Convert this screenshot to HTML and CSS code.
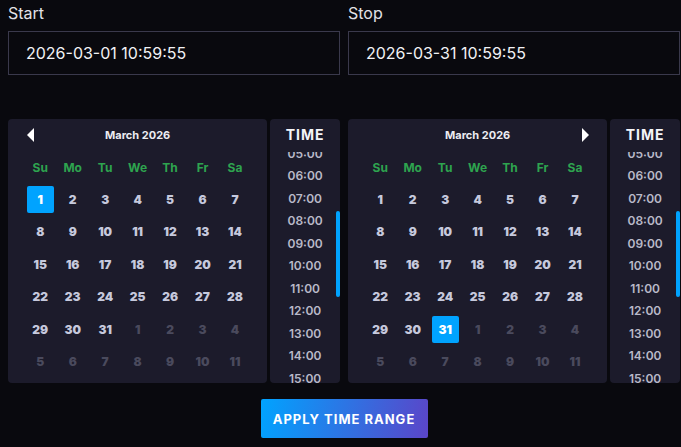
FILE: index.html
```html
<!DOCTYPE html>
<html lang="en">
<head>
  <meta charset="UTF-8" />
  <meta name="viewport" content="width=device-width, initial-scale=1.0" />
  <title>Time Range</title>
  <link rel="stylesheet" href="styles.css">
</head>
<body>
  <div class="picker">
    <div class="range">
      <div class="field">
        <label for="start">Start</label>
        <input id="start" type="text" value="2026-03-01 10:59:55">
      </div>
      <div class="field">
        <label for="stop">Stop</label>
        <input id="stop" type="text" value="2026-03-31 10:59:55">
      </div>
    </div>

    <div class="range">
      <div class="cal-wrap">
        <div class="calendar">
          <div class="cal-head">
            <span class="nav prev"></span>
            <span class="month">March 2026</span>
          </div>
          <div class="days" id="daysStart"></div>
        </div>
        <div class="time">
          <div class="time-head">TIME</div>
          <div class="time-list"><ul class="hours"></ul></div>
          <span class="thumb"></span>
        </div>
      </div>

      <div class="cal-wrap">
        <div class="calendar">
          <div class="cal-head">
            <span class="month">March 2026</span>
            <span class="nav next"></span>
          </div>
          <div class="days" id="daysStop"></div>
        </div>
        <div class="time">
          <div class="time-head">TIME</div>
          <div class="time-list"><ul class="hours"></ul></div>
          <span class="thumb"></span>
        </div>
      </div>
    </div>

    <div class="actions">
      <button class="apply">APPLY TIME RANGE</button>
    </div>
  </div>

  <script>
    const weekdays = ['Su', 'Mo', 'Tu', 'We', 'Th', 'Fr', 'Sa'];

    function buildDays(el, selected) {
      let html = weekdays.map(d => `<span class="wd">${d}</span>`).join('');
      // March 2026 starts on a Sunday
      for (let i = 0; i < 42; i++) {
        const day = i + 1;
        if (day <= 31) {
          const cls = day === selected ? 'day sel' : 'day';
          html += `<span class="${cls}"><b>${day}</b></span>`;
        } else {
          html += `<span class="day muted"><b>${day - 31}</b></span>`;
        }
      }
      el.innerHTML = html;
    }

    buildDays(document.getElementById('daysStart'), 1);
    buildDays(document.getElementById('daysStop'), 31);

    document.querySelectorAll('.hours').forEach(ul => {
      let html = '';
      for (let h = 0; h < 24; h++) {
        html += `<li>${String(h).padStart(2, '0')}:00</li>`;
      }
      ul.innerHTML = html;
    });
  </script>
</body>
</html>
```

FILE: styles.css
```css
body {
  margin: 0;
  background: #09090e;
  color: #e2e2e8;
  font-family: Inter, 'Liberation Sans', sans-serif;
}
.picker {
  width: 672px;
  padding: 3px 0 0 8px;
}
.range {
  display: grid;
  grid-template-columns: 332px 332px;
  gap: 8px;
}
.field {
  display: flex;
  flex-direction: column;
}
.field label {
  font-size: 16px;
  line-height: 20px;
  margin-bottom: 8px;
}
.field input {
  box-sizing: border-box;
  height: 44px;
  background: #09090e;
  color: #f2f2f5;
  border: 1px solid #3a394c;
  padding: 0 17px;
  font-family: inherit;
  font-size: 16px;
  outline: none;
}
.range + .range {
  margin-top: 44px;
}
.cal-wrap {
  display: flex;
  gap: 3px;
  height: 264px;
}
.calendar {
  width: 260px;
  box-sizing: border-box;
  background: #1c1b2b;
  border-radius: 4px;
  padding: 0 16px;
}
.cal-head {
  position: relative;
  height: 32px;
  display: flex;
  align-items: center;
  justify-content: center;
}
.month {
  font-size: 11px;
  font-weight: 700;
  color: #ececf2;
}
.nav {
  position: absolute;
  top: 9px;
  width: 0;
  height: 0;
  border-top: 7px solid transparent;
  border-bottom: 7px solid transparent;
}
.prev {
  left: 3px;
  border-right: 7px solid #fff;
}
.next {
  right: 2px;
  border-left: 7px solid #fff;
}
.days {
  display: grid;
  grid-template-columns: repeat(7, 1fr);
  grid-template-rows: 32px;
  grid-auto-rows: 32.5px;
}
.wd {
  display: flex;
  align-items: center;
  justify-content: center;
  font-size: 12px;
  font-weight: 700;
  color: #2ea44f;
}
.day {
  display: flex;
  align-items: center;
  justify-content: center;
  font-size: 12px;
  font-weight: 700;
  color: #c6c9dd;
}
.day b {
  display: flex;
  align-items: center;
  justify-content: center;
  width: 27px;
  height: 27px;
  border-radius: 2px;
}
.day.sel b {
  background: #00a3ff;
  color: #fff;
}
.day.muted {
  color: #4a4a5d;
}
.time {
  position: relative;
  width: 70px;
  background: #1c1b2b;
  border-radius: 4px;
  display: flex;
  flex-direction: column;
}
.time-head {
  height: 30px;
  padding-bottom: 3px;
  display: flex;
  align-items: center;
  justify-content: center;
  font-size: 14px;
  font-weight: 700;
  letter-spacing: 1px;
  color: #f4f4f8;
}
.time-list {
  flex: 1;
  overflow: hidden;
}
.hours {
  list-style: none;
  margin: -122px 0 0;
  padding: 0;
}
.hours li {
  height: 22.5px;
  line-height: 22.5px;
  text-align: center;
  font-size: 12px;
  font-weight: 600;
  color: #b9b9c8;
}
.thumb {
  position: absolute;
  right: 0;
  top: 92px;
  width: 4px;
  height: 86px;
  border-radius: 2px;
  background: #00a3ff;
}
.actions {
  display: flex;
  justify-content: center;
  margin-top: 16px;
}
.apply {
  width: 167px;
  height: 39px;
  border: none;
  border-radius: 2px;
  background: linear-gradient(100deg, #00a3ff, #5b45c8);
  color: #fff;
  font-family: inherit;
  font-size: 13px;
  font-weight: 700;
  letter-spacing: 1px;
  cursor: pointer;
}
```
